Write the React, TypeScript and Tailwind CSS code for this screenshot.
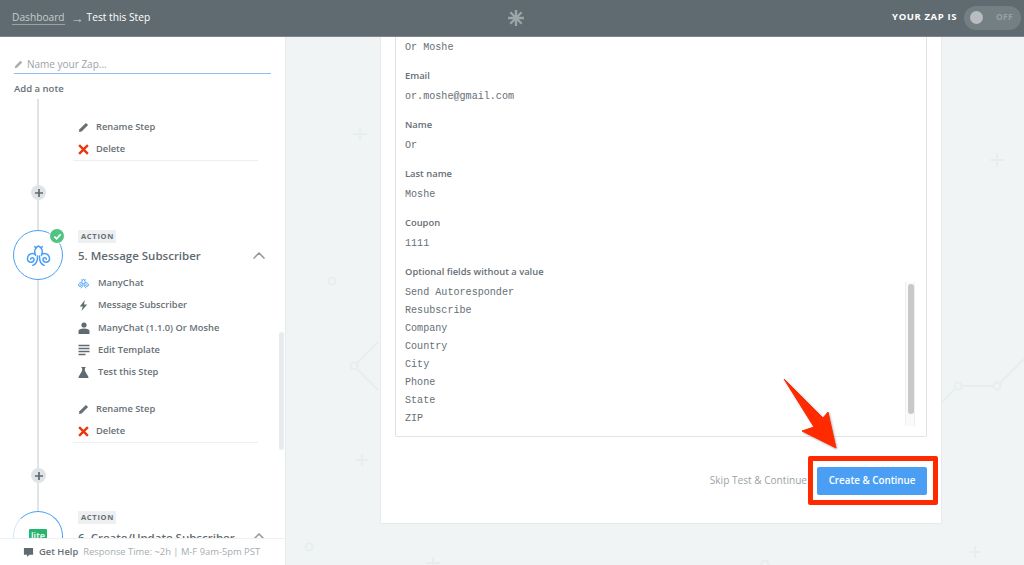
const sans = "font-['Open_Sans','Noto_Sans',sans-serif]";

const PencilIcon = ({ className = "" }: { className?: string }) => (
  <svg viewBox="0 0 12 12" className={className} fill="currentColor">
    <path d="M8.6 1 11 3.4 4 10.4 1 11 1.6 8Z" />
  </svg>
);

const CrossIcon = () => (
  <svg viewBox="0 0 12 12" className="w-[11px] h-[11px]" stroke="#e8380d" strokeWidth="2.6" fill="none">
    <path d="M1.2 1.2 10.8 10.8M10.8 1.2 1.2 10.8" />
  </svg>
);

const Octopus = ({ className = "", strokeWidth = 1.8 }: { className?: string; strokeWidth?: number }) => (
  <svg viewBox="0 0 30 28" className={className} fill="none" stroke="#4a9ff5" strokeWidth={strokeWidth} strokeLinecap="round">
    <path d="M11.500 14C9.500 10 10 4.500 15 2.500 20 4.500 20.500 10 18.500 14" />
    <path d="M10.500 3 11.500 5M19.500 3 18.500 5" />
    <path d="M11 12.500C7 10 1.500 13 1.500 18 1.500 23 8.500 23.500 9.500 19.500 10 16.500 6 15.500 5.500 18.500" />
    <path d="M19 12.500C23 10 28.500 13 28.500 18 28.500 23 21.500 23.500 20.500 19.500 20 16.500 24 15.500 24.500 18.500" />
    <path d="M13.800 14.500C14 20 12 24.500 8 26M16.200 14.500C16 20 18 24.500 22 26" />
  </svg>
);

const BoltIcon = () => (
  <svg viewBox="0 0 12 12" className="w-[11px] h-[11px]" fill="#5f6b70">
    <path d="M7.500 0 2 7H5.200L3.800 12 10 4.800H6.500Z" />
  </svg>
);

const PersonIcon = () => (
  <svg viewBox="0 0 12 12" className="w-[12px] h-[12px]" fill="#5f6b70">
    <circle cx="6" cy="3" r="2.600" />
    <path d="M0.500 12V9C0.500 7.500 2.500 6.500 6 6.500S11.500 7.500 11.500 9V12Z" />
  </svg>
);

const LinesIcon = () => (
  <svg viewBox="0 0 12 12" className="w-[12px] h-[12px]" stroke="#5f6b70" strokeWidth="1.400">
    <path d="M0.500 1.500H11.500M0.500 4.500H11.500M0.500 7.500H11.500M0.500 10.500H7.500" />
  </svg>
);

const FlaskIcon = () => (
  <svg viewBox="0 0 12 12" className="w-[11px] h-[11px]" fill="#5f6b70">
    <path d="M3.800 0H8.200V1H7.500V4L11.300 10.500C11.700 11.300 11.200 12 10.500 12H1.500C0.800 12 0.300 11.300 0.700 10.500L4.500 4V1H3.800Z" />
  </svg>
);

const Row = ({ icon, label }: { icon: React.ReactNode; label: string }) => (
  <div className="flex items-center h-[22.250px] text-[9.300px] font-semibold text-[#666f75]">
    <span className="w-[20px] flex items-center shrink-0">{icon}</span>
    {label}
  </div>
);

const StepFooter = () => (
  <div className="ml-[73px] w-[185px] pl-[5px] border-b border-[#eceff0]">
    <div className="h-[22px] flex items-center text-[9.300px] font-semibold text-[#666f75]">
      <span className="w-[18px]"><PencilIcon className="w-[11px] h-[11px]" /></span>
      Rename Step
    </div>
    <div className="h-[22px] flex items-center text-[9.300px] font-semibold text-[#666f75]">
      <span className="w-[18px]"><CrossIcon /></span>
      Delete
    </div>
  </div>
);

const AddStep = ({ className = "" }: { className?: string }) => (
  <div className={`relative ml-[31px] w-[15px] h-[15px] rounded-full bg-[#dfe3e5] flex items-center justify-center ${className}`}>
    <svg viewBox="0 0 8 8" className="w-[8px] h-[8px]" stroke="#5f6b70" strokeWidth="1.700">
      <path d="M4 0V8M0 4H8" />
    </svg>
  </div>
);

const ActionBadge = () => (
  <div className="flex items-center w-[38px] h-[13px] px-[3px] rounded-[1px] bg-[#edeff0] text-[7.500px] font-bold tracking-[0.700px] text-[#666f75]">
    ACTION
  </div>
);

const StepTitle = ({ title }: { title: string }) => (
  <div className="mt-[4px] flex items-center justify-between h-[18px] text-[11.500px] font-semibold text-[#5f6b70] whitespace-nowrap">
    {title}
    <svg viewBox="0 0 12 7" className="w-[12px] h-[7px] -mt-[2px]" fill="none" stroke="#8f989c" strokeWidth="1.500">
      <path d="M0.500 6.500 6 1 11.500 6.500" />
    </svg>
  </div>
);

const Field = ({ label, value, className = "mt-[12.500px]" }: { label: string; value: string; className?: string }) => (
  <div className={className}>
    <div className="h-[20px] leading-[20px] text-[9.400px] font-semibold text-[#666f75]">{label}</div>
    <div className="mt-[5.500px] h-[11px] leading-[11px] font-['Liberation_Mono',monospace] text-[10.100px] text-[#666f75]">{value}</div>
  </div>
);

const optional = ["Send Autoresponder", "Resubscribe", "Company", "Country", "City", "Phone", "State", "ZIP"];

const Sidebar = () => (
  <aside className="relative w-[286px] shrink-0 flex flex-col bg-white border-r border-[#e6eaec] overflow-hidden">
    <div className="h-[62px] shrink-0 px-[14px] pt-[20px]">
      <div className="w-[257px] h-[17px] pb-[2px] border-b border-[#8fbdec] flex items-center text-[10px] text-[#9aa3a8]">
        <PencilIcon className="w-[9px] h-[9px] mr-[4px] text-[#a5adb1]" />
        Name your Zap...
      </div>
      <div className="mt-[8px] text-[9.500px] font-semibold text-[#666f75]">Add a note</div>
    </div>

    <div className="relative flex-1 min-h-0 overflow-hidden">
      <div className="absolute left-[37px] top-0 bottom-0 w-[2px] bg-[#dfe4e7]" />

      <div className="pt-[17px]">
        <StepFooter />
        <AddStep className="mt-[24px]" />

        <div className="relative flex mt-[30px] ml-[13px]">
          <div className="relative w-[50px] h-[50px] shrink-0 rounded-full border-[1.500px] border-[#4a9ff5] bg-white flex items-center justify-center">
            <Octopus className="w-[25px] h-[23px]" />
            <div className="absolute -top-[3px] -right-[3px] w-[16px] h-[16px] rounded-full bg-[#4fc483] border border-white flex items-center justify-center">
              <svg viewBox="0 0 10 10" className="w-[9px] h-[9px]" fill="none" stroke="white" strokeWidth="2">
                <path d="M1.500 5.200 4 7.500 8.500 2.500" />
              </svg>
            </div>
          </div>
          <div className="ml-[15px] w-[187px]">
            <ActionBadge />
            <StepTitle title="5. Message Subscriber" />
          </div>
        </div>

        <div className="ml-[78px] mt-[-8px] w-[180px]">
          <Row icon={<Octopus className="w-[11px] h-[11px]" strokeWidth={2.500} />} label="ManyChat" />
          <Row icon={<BoltIcon />} label="Message Subscriber" />
          <Row icon={<PersonIcon />} label="ManyChat (1.1.0) Or Moshe" />
          <Row icon={<LinesIcon />} label="Edit Template" />
          <Row icon={<FlaskIcon />} label="Test this Step" />
        </div>

        <div className="mt-[15px]"><StepFooter /></div>
        <AddStep className="mt-[25px]" />

        <div className="relative flex mt-[28px] ml-[13px]">
          <div className="relative w-[50px] h-[50px] shrink-0 rounded-full border-[1.500px] border-[#4a9ff5] border-l-[#d5e6f7] bg-white flex justify-center pt-[17px]">
            <span className="h-[16px] w-[18px] rounded-[1px] bg-[#25b56e] text-center text-[9px] leading-[14px] font-semibold text-white">lite</span>
          </div>
          <div className="ml-[15px] w-[187px]">
            <ActionBadge />
            <StepTitle title="6. Create/Update Subscriber" />
          </div>
        </div>
      </div>
    </div>

    <div className="relative h-[27px] shrink-0 bg-white border-t border-[#eef0f1] flex items-center pl-[23px] text-[9.400px] whitespace-nowrap">
      <svg viewBox="0 0 12 12" className="w-[11px] h-[11px] mr-[5px]" fill="#5f6b70">
        <path d="M1 1H11V8.500H7L4.500 11V8.500H1Z" />
      </svg>
      <span className="font-semibold text-[#666f75] mr-[5px]">Get Help</span>
      <span className="text-[#a5adb1]">Response Time: ~2h | M-F 9am-5pm PST</span>
    </div>

    <div className="absolute right-[1px] top-[295px] w-[5px] h-[118px] rounded-full bg-[#e8ebed]" />
  </aside>
);

const Pattern = () => (
  <svg className="absolute inset-0 w-full h-full" viewBox="286 37 738 528" fill="none" stroke="#e8edef" strokeWidth="2">
    <circle cx="332" cy="281" r="3.500" />
    <circle cx="309" cy="547" r="3.500" />
    <circle cx="765" cy="564" r="3.500" />
    <circle cx="354" cy="366" r="3.500" />
    <path d="M356.500 363.500 378 342M356.500 368.500 378 390" />
    <circle cx="958" cy="386" r="3.500" />
    <circle cx="997" cy="386" r="3.500" />
    <path d="M942 402 955.500 388.500M961.500 386H993.500M999.500 383.500 1024 359" />
    <path d="M360 127V141M353 134H367M362 454V466M356 460H368M433 557V570M426 563H440M997 153V167M990 160H1004M975 546V558M969 552H981" />
  </svg>
);

export default function App() {
  return (
    <div className={`relative w-[1024px] h-[565px] overflow-hidden flex flex-col bg-[#f0f4f5] ${sans}`}>
      <header className="h-[37px] shrink-0 flex items-center bg-[#5f6b70] border-b border-[#7c878b] pl-[12px] pr-[3px] pb-[1px] text-[10.200px]">
        <span className="text-[#c7cdcf] border-b border-[#9aa3a6] leading-[14px]">Dashboard</span>
        <span className="ml-[6px] mr-[3px] text-[#c7cdcf] text-[13px] leading-[14px]">→</span>
        <span className="text-white">Test this Step</span>
        <div className="ml-[358px]">
          <svg viewBox="0 0 16 16" className="w-[16px] h-[16px]" stroke="#9ca5a8" strokeWidth="2.300">
            <path d="M8 0V16M0 8H16M2.300 2.300 13.700 13.700M13.700 2.300 2.300 13.700" />
            <circle cx="8" cy="8" r="2.500" fill="#9ca5a8" stroke="none" />
          </svg>
        </div>
        <span className="ml-auto mr-[7px] text-[9.500px] font-bold tracking-[0.600px] text-white">YOUR ZAP IS</span>
        <div className="w-[57px] h-[24px] rounded-full bg-[#747f84] flex items-center justify-between pl-[6px] pr-[8px]">
          <span className="w-[13px] h-[13px] rounded-full bg-[#b7bdc0]" />
          <span className="text-[8.500px] font-bold tracking-[0.300px] text-[#98a1a5]">OFF</span>
        </div>
      </header>

      <div className="flex flex-1 min-h-0">
        <Sidebar />
        <main className="relative flex-1 min-w-0 overflow-hidden">
          <Pattern />
          <section className="relative ml-[94px] w-[562px] h-[487px] bg-white border-x border-b border-[#e6eaec] rounded-b-[2px] px-[14px]">
            <div className="h-[400px] border-x border-b border-[#dfe3e5] rounded-b-[2px] pl-[9px] pr-[11px]">
              <div className="pt-[5px] h-[11px] box-content leading-[11px] font-['Liberation_Mono',monospace] text-[10.100px] text-[#666f75]">Or Moshe</div>
              <Field label="Email" value="or.moshe@gmail.com" />
              <Field label="Name" value="Or" />
              <Field label="Last name" value="Moshe" />
              <Field label="Coupon" value="1111" />
              <div className="mt-[12.500px] h-[20px] leading-[20px] text-[9.400px] font-semibold text-[#666f75]">Optional fields without a value</div>
              <div className="flex justify-between">
                <div className="mt-[2px] font-['Liberation_Mono',monospace] text-[10.100px] leading-[18px] text-[#666f75]">
                  {optional.map((item) => (
                    <div key={item}>{item}</div>
                  ))}
                </div>
                <div className="w-[10px] h-[144px] bg-[#fafafa] border-x border-[#f0f0f0] px-[2px] pt-[2px]">
                  <div className="w-[6px] h-[130px] rounded-full bg-[#c8c8c8]" />
                </div>
              </div>
            </div>
            <div className="flex items-center justify-end mt-[30px]">
              <span className="mr-[10px] text-[10.100px] text-[#9aa3a8]">Skip Test &amp; Continue</span>
              <button className="w-[110px] h-[28px] rounded-[2px] bg-[#4a9ff5] text-[9.800px] font-semibold text-white">Create &amp; Continue</button>
            </div>
          </section>
        </main>
      </div>

      <div className="absolute left-[808px] top-[456px] w-[130px] h-[49px] border-[5px] border-[#ff2a00] rounded-[2px]" />
      <svg className="absolute left-[780px] top-[375px] w-[62px] h-[78px] drop-shadow-[1px_1px_1px_rgba(0,0,0,0.3)]" viewBox="780 375 62 78">
        <path d="M784 379 823 418 828 412 836 448 802 431 814 427Z" fill="#ff2a00" stroke="#ff2a00" strokeLinejoin="round" />
      </svg>
    </div>
  );
}
